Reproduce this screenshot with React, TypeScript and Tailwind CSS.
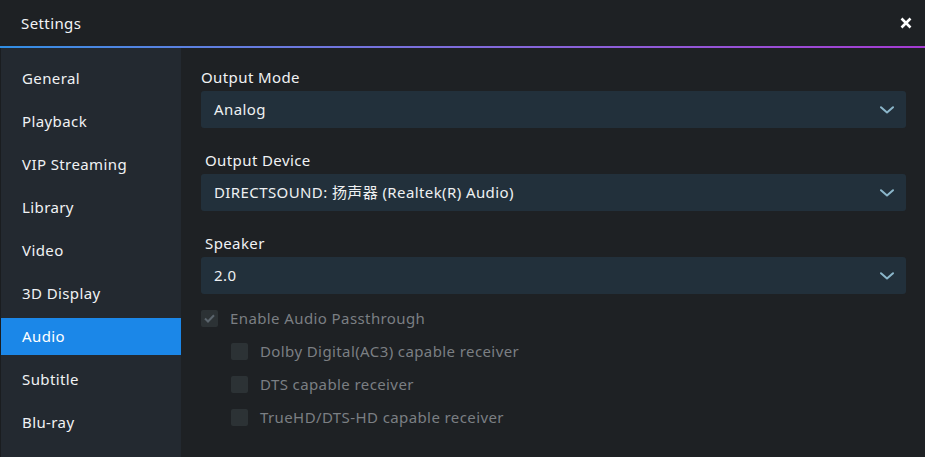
import React from "react";

const navItems = [
  "General",
  "Playback",
  "VIP Streaming",
  "Library",
  "Video",
  "3D Display",
  "Audio",
  "Subtitle",
  "Blu-ray",
];

function Chevron() {
  return (
    <svg width="14" height="8" viewBox="0 0 14 8" fill="none">
      <path d="M1 1.2 L7 6.5 L13 1.2" stroke="#8bb6ca" strokeWidth="2" strokeLinecap="round" strokeLinejoin="round" />
    </svg>
  );
}

function Select({ value }: { value: string }) {
  return (
    <div className="h-[37px] rounded-[3px] bg-[#22303b] flex items-center justify-between pl-[13px] pr-[12px] text-[15px] text-[#eef0f2]">
      <span>{value}</span>
      <Chevron />
    </div>
  );
}

function Box({ checked }: { checked?: boolean }) {
  return (
    <div className="w-[17px] h-[17px] rounded-[2px] bg-[#2c3235] flex items-center justify-center shrink-0">
      {checked && (
        <svg width="11" height="9" viewBox="0 0 11 9" fill="none">
          <path d="M1 4.5 L4 7.5 L10 1.2" stroke="#5b656d" strokeWidth="2" />
        </svg>
      )}
    </div>
  );
}

export default function App() {
  return (
    <div
      className="w-[925px] h-[457px] flex flex-col bg-[#1e2124] overflow-hidden tracking-[0.4px]"
      style={{ fontFamily: '"Noto Sans", "Noto Sans CJK SC", sans-serif' }}
    >
      <div className="h-[46px] shrink-0 flex items-center justify-between pl-[21px] pr-[13px] bg-[#1e2124]">
        <span className="text-[15px] text-[#f2f4f6] pt-[1px]">Settings</span>
        <svg width="12" height="12" viewBox="0 0 12 12">
          <path d="M1.5 1.5 L10.5 10.5 M10.5 1.5 L1.5 10.5" stroke="#ffffff" strokeWidth="2.6" />
        </svg>
      </div>
      <div className="h-[2px] shrink-0 bg-linear-to-r from-[#2f8ee4] to-[#a43ad2]" />
      <div className="flex flex-1 min-h-0">
        <div className="w-[181px] shrink-0 border-l border-[#1a1d20] bg-[#232930] pt-[12px] flex flex-col gap-[6px]">
          {navItems.map((item) => (
            <div
              key={item}
              className={
                item === "Audio"
                  ? "h-[37px] flex items-center pl-[21px] text-[15px] text-white bg-[#1b87e8]"
                  : "h-[37px] flex items-center pl-[21px] text-[15px] text-[#f0f2f4]"
              }
            >
              {item}
            </div>
          ))}
        </div>
        <div className="flex-1 pl-[20px] pr-[19px] pt-[19px] flex flex-col">
          <div className="h-[20px] flex items-center text-[15px] text-[#f0f2f4] mb-[4px]">Output Mode</div>
          <Select value="Analog" />
          <div className="h-[20px] flex items-center pl-[4px] text-[15px] text-[#f0f2f4] mt-[22px] mb-[4px]">Output Device</div>
          <Select value="DIRECTSOUND: 扬声器 (Realtek(R) Audio)" />
          <div className="h-[20px] flex items-center pl-[4px] text-[15px] text-[#f0f2f4] mt-[22px] mb-[4px]">Speaker</div>
          <Select value="2.0" />
          <div className="flex flex-col mt-[16px] text-[15px] text-[#7b7f83]">
            <div className="h-[17px] flex items-center gap-[12px]">
              <Box checked />
              <span>Enable Audio Passthrough</span>
            </div>
            <div className="h-[17px] flex items-center gap-[12px] pl-[30px] mt-[16px]">
              <Box />
              <span>Dolby Digital(AC3) capable receiver</span>
            </div>
            <div className="h-[17px] flex items-center gap-[12px] pl-[30px] mt-[16px]">
              <Box />
              <span>DTS capable receiver</span>
            </div>
            <div className="h-[17px] flex items-center gap-[12px] pl-[30px] mt-[16px]">
              <Box />
              <span>TrueHD/DTS-HD capable receiver</span>
            </div>
          </div>
        </div>
      </div>
    </div>
  );
}
